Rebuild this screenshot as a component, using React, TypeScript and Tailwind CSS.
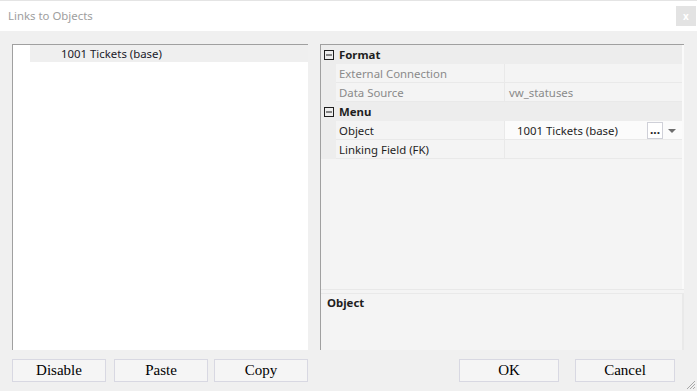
import React from "react";

const ui = { fontFamily: '"Noto Sans", "Open Sans", sans-serif' };
const serif = { fontFamily: '"Liberation Serif", "Times New Roman", serif' };

type Row =
  | { kind: "cat"; label: string }
  | { kind: "prop"; label: string; value?: string; readOnly?: boolean; editor?: boolean };

const rows: Row[] = [
  { kind: "cat", label: "Format" },
  { kind: "prop", label: "External Connection", readOnly: true },
  { kind: "prop", label: "Data Source", value: "vw_statuses", readOnly: true },
  { kind: "cat", label: "Menu" },
  { kind: "prop", label: "Object", value: "1001 Tickets (base)", editor: true },
  { kind: "prop", label: "Linking Field (FK)" },
];

function MinusBox() {
  return (
    <svg width="10" height="10" viewBox="0 0 10 10" className="shrink-0">
      <rect x="0.5" y="0.5" width="9" height="9" fill="none" stroke="#1e1e1e" />
      <line x1="2" y1="5" x2="8" y2="5" stroke="#1e1e1e" />
    </svg>
  );
}

function GridRow({ row }: { row: Row }) {
  if (row.kind === "cat") {
    return (
      <div className="flex h-[19px] items-center bg-[#ededed] pt-px">
        <div className="flex w-[15px] justify-center pl-[1px]">
          <MinusBox />
        </div>
        <span className="pl-[3px] text-[11.4px] font-bold text-[#1e1e1e]">{row.label}</span>
      </div>
    );
  }
  const textColor = row.readOnly ? "text-[#8a8a8a]" : "text-[#1e1e1e]";
  return (
    <div className="flex h-[19px] bg-[#ededed]">
      <div className="w-[15px]" />
      <div className={`flex w-[168px] items-center border-b border-[#e9e9e9] bg-[#f4f4f4] pl-[3px] pt-px text-[11.4px] ${textColor}`}>
        {row.label}
      </div>
      <div
        className={`flex flex-1 items-center border-b border-l border-[#e9e9e9] pl-[4px] pt-px text-[11.4px] ${textColor} ${
          row.editor ? "bg-[#fbfbfb]" : "bg-[#f4f4f4]"
        }`}
      >
        {row.editor ? (
          <>
            <span className="flex-1 pl-[8px]">{row.value}</span>
            <span className="mr-[2px] flex h-[17px] w-[16px] items-end justify-center border border-[#cfd0d8] bg-white pb-[2px] text-[12px] font-bold leading-none">
              ...
            </span>
            <svg width="14" height="17" viewBox="0 0 14 17" className="mr-[3px]">
              <path d="M3 7 L11 7 L7 11 Z" fill="#6e6e6e" />
            </svg>
          </>
        ) : (
          row.value
        )}
      </div>
    </div>
  );
}

function Button({ label, w }: { label: string; w: string }) {
  return (
    <button
      className={`${w} h-[23px] border border-[#d8d8e2] bg-[#f5f5f5] text-[15px] leading-none text-black`}
      style={serif}
    >
      {label}
    </button>
  );
}

export default function App() {
  return (
    <div className="flex h-[391px] w-[697px] flex-col overflow-hidden bg-[#f0f0f0]" style={ui}>
      <div className="h-px bg-[#e4e4e4]" />
      <div className="flex h-[30px] items-center justify-between bg-white pl-[8px] pr-[1px]">
        <span className="text-[11.4px] text-[#9e9e9e]">Links to Objects</span>
        <div className="flex h-[20px] w-[20px] items-center justify-center bg-[#e3e3e3] text-[10px] font-bold leading-none text-white">
          x
        </div>
      </div>

      <div className="flex flex-1 flex-col px-[12px] pt-[13px]">
        <div className="flex h-[306px] gap-[12px]">
          <div className="w-[296px] border-l border-t border-[#a0a0a0] bg-white">
            <div className="ml-[17px] flex h-[17px] items-center bg-[#efefef] pl-[31px] text-[11.4px] text-[#1a1a2a]">
              1001 Tickets (base)
            </div>
          </div>

          <div className="flex w-[364px] flex-col border-l border-t border-[#a0a0a0] bg-[#f4f4f4]">
            <div className="flex flex-1 flex-col border-r-2 border-[#fafafa]">
              {rows.map((r, i) => (
                <GridRow key={i} row={r} />
              ))}
            </div>
            <div className="h-[4px] border-t border-[#e8e8e8]" />
            <div className="h-[57px] border-t border-r-2 border-[#e9e9e9] px-[6px] pt-[1px] text-[11.4px] leading-[16px]">
              <span className="font-bold text-[#1e1e1e]">Object</span>
            </div>
          </div>
        </div>

        <div className="mt-[9px] flex items-start">
          <Button label="Disable" w="w-[94px]" />
          <div className="w-[8px]" />
          <Button label="Paste" w="w-[94px]" />
          <div className="w-[6px]" />
          <Button label="Copy" w="w-[94px]" />
          <div className="w-[151px]" />
          <Button label="OK" w="w-[100px]" />
          <div className="w-[16px]" />
          <Button label="Cancel" w="w-[100px]" />
          <div className="flex-1" />
          <svg width="12" height="12" viewBox="0 0 12 12" className="mt-[19px] -mr-[11px]">
            <path d="M11 3 L3 11 M11 6 L6 11 M11 9 L9 11" stroke="#a8a8a8" strokeWidth="1" />
          </svg>
        </div>
      </div>
    </div>
  );
}
